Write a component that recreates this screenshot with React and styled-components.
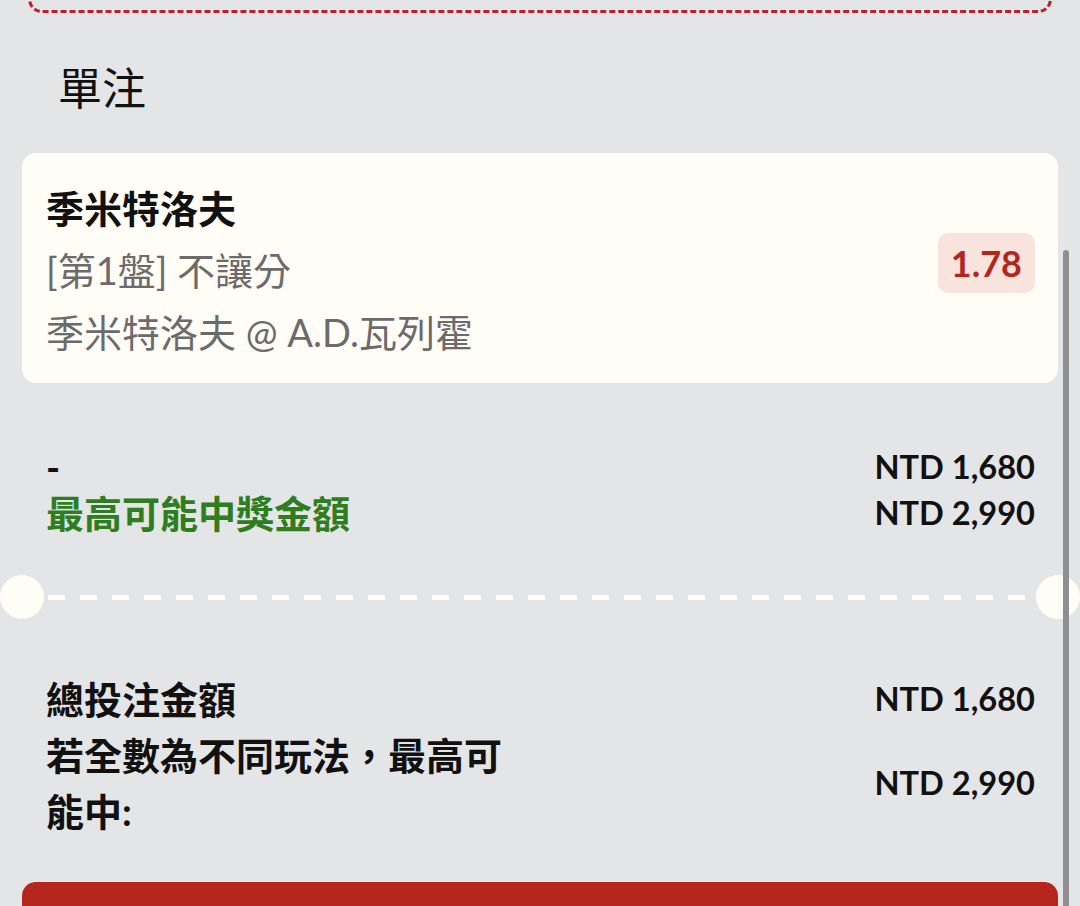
import React from "react";
import styled, { createGlobalStyle } from "styled-components";

const GlobalStyle = createGlobalStyle`
  html, body {
    margin: 0;
    padding: 0;
    height: 906px;
    overflow: hidden;
    background: #e4e5e7;
    font-family: "Lato", "Noto Sans CJK TC", "Noto Sans", sans-serif;
    color: #111;
  }
`;

function App() {
  return (
    <>
      <GlobalStyle />
      <Page>
        <PrevCardEdge />
        <Heading>單注</Heading>
        <BetCard>
          <BetInfo>
            <Selection>季米特洛夫</Selection>
            <Meta>[第1盤] 不讓分</Meta>
            <Meta>季米特洛夫 @ A.D.瓦列霍</Meta>
          </BetInfo>
          <Odds>1.78</Odds>
        </BetCard>

        <SummaryRow>
          <LabelStack>
            <Label>-</Label>
            <Label $green>最高可能中獎金額</Label>
          </LabelStack>
          <ValueStack>
            <Amount>NTD 1,680</Amount>
            <Amount>NTD 2,990</Amount>
          </ValueStack>
        </SummaryRow>

        <Divider>
          <Notch />
          <DashLine />
          <Notch />
        </Divider>

        <TotalBlock>
          <TotalRow>
            <TotalLabel>總投注金額</TotalLabel>
            <Amount>NTD 1,680</Amount>
          </TotalRow>
          <TotalRow>
            <TotalLabel>若全數為不同玩法，最高可能中:</TotalLabel>
            <Amount>NTD 2,990</Amount>
          </TotalRow>
        </TotalBlock>

        <SubmitButton type="button" aria-label="確認投注" />
        <Scrollbar />
      </Page>
    </>
  );
}

const Page = styled.div`
  position: relative;
  padding: 0 22px;
  height: 906px;
  overflow: hidden;
`;

const PrevCardEdge = styled.div`
  margin: -31px 6px 0;
  height: 38px;
  border: 3px dashed #bd1f2c;
  border-radius: 14px;
`;

const Heading = styled.h2`
  margin: 44px 0 34px 36px;
  font-size: 44px;
  line-height: 62px;
  font-weight: 400;
  color: #111;
`;

const BetCard = styled.div`
  background: #fffdf5;
  border-radius: 14px;
  padding: 24px 23px 20px 24px;
  display: flex;
  align-items: center;
  justify-content: space-between;
`;

const BetInfo = styled.div`
  display: flex;
  flex-direction: column;
`;

const Selection = styled.div`
  font-size: 38px;
  line-height: 62px;
  font-weight: 700;
  color: #111;
`;

const Meta = styled.div`
  font-size: 38px;
  line-height: 62px;
  color: #6b6b6b;
`;

const Odds = styled.div`
  margin-top: -14px;
  background: #f8e4dd;
  color: #b3261e;
  border-radius: 10px;
  padding: 0 13px;
  height: 60px;
  display: flex;
  align-items: center;
  font-size: 36px;
  font-weight: 700;
`;

const SummaryRow = styled.div`
  margin-top: 61px;
  padding: 0 23px 0 24px;
  display: flex;
  justify-content: space-between;
  align-items: flex-start;
`;

const LabelStack = styled.div`
  display: flex;
  flex-direction: column;
`;

const Label = styled.div`
  font-size: 38px;
  line-height: 46px;
  font-weight: 700;
  color: ${(p) => (p.$green ? "#2e7d1f" : "#111")};
`;

const ValueStack = styled.div`
  display: flex;
  flex-direction: column;
  align-items: flex-end;
`;

const Amount = styled.div`
  font-size: 32.6px;
  line-height: 46px;
  font-weight: 700;
  color: #111;
  white-space: nowrap;
`;

const Divider = styled.div`
  margin: 39px -22px 0;
  display: flex;
  align-items: center;
`;

const Notch = styled.div`
  width: 44px;
  height: 44px;
  border-radius: 50%;
  background: #fffdf5;
  flex: none;
`;

const DashLine = styled.div`
  flex: 1;
  height: 5px;
  margin-left: 4px;
  background-image: repeating-linear-gradient(
    to right,
    #fffdf5 0,
    #fffdf5 17px,
    transparent 17px,
    transparent 32px
  );
`;

const TotalBlock = styled.div`
  margin-top: 52px;
  padding: 0 23px 0 24px;
  display: flex;
  flex-direction: column;
`;

const TotalRow = styled.div`
  display: flex;
  justify-content: space-between;
  align-items: center;
`;

const TotalLabel = styled.div`
  max-width: 470px;
  font-size: 38px;
  line-height: 56px;
  font-weight: 700;
  color: #111;
`;

const SubmitButton = styled.button`
  display: block;
  margin-top: 43px;
  width: 100%;
  height: 100px;
  border: none;
  border-radius: 14px;
  background: #b5261f;
`;

const Scrollbar = styled.div`
  position: absolute;
  top: 250px;
  right: 11px;
  width: 6px;
  height: 700px;
  border-radius: 3px;
  background: #8e8e93;
`;

export default App;
